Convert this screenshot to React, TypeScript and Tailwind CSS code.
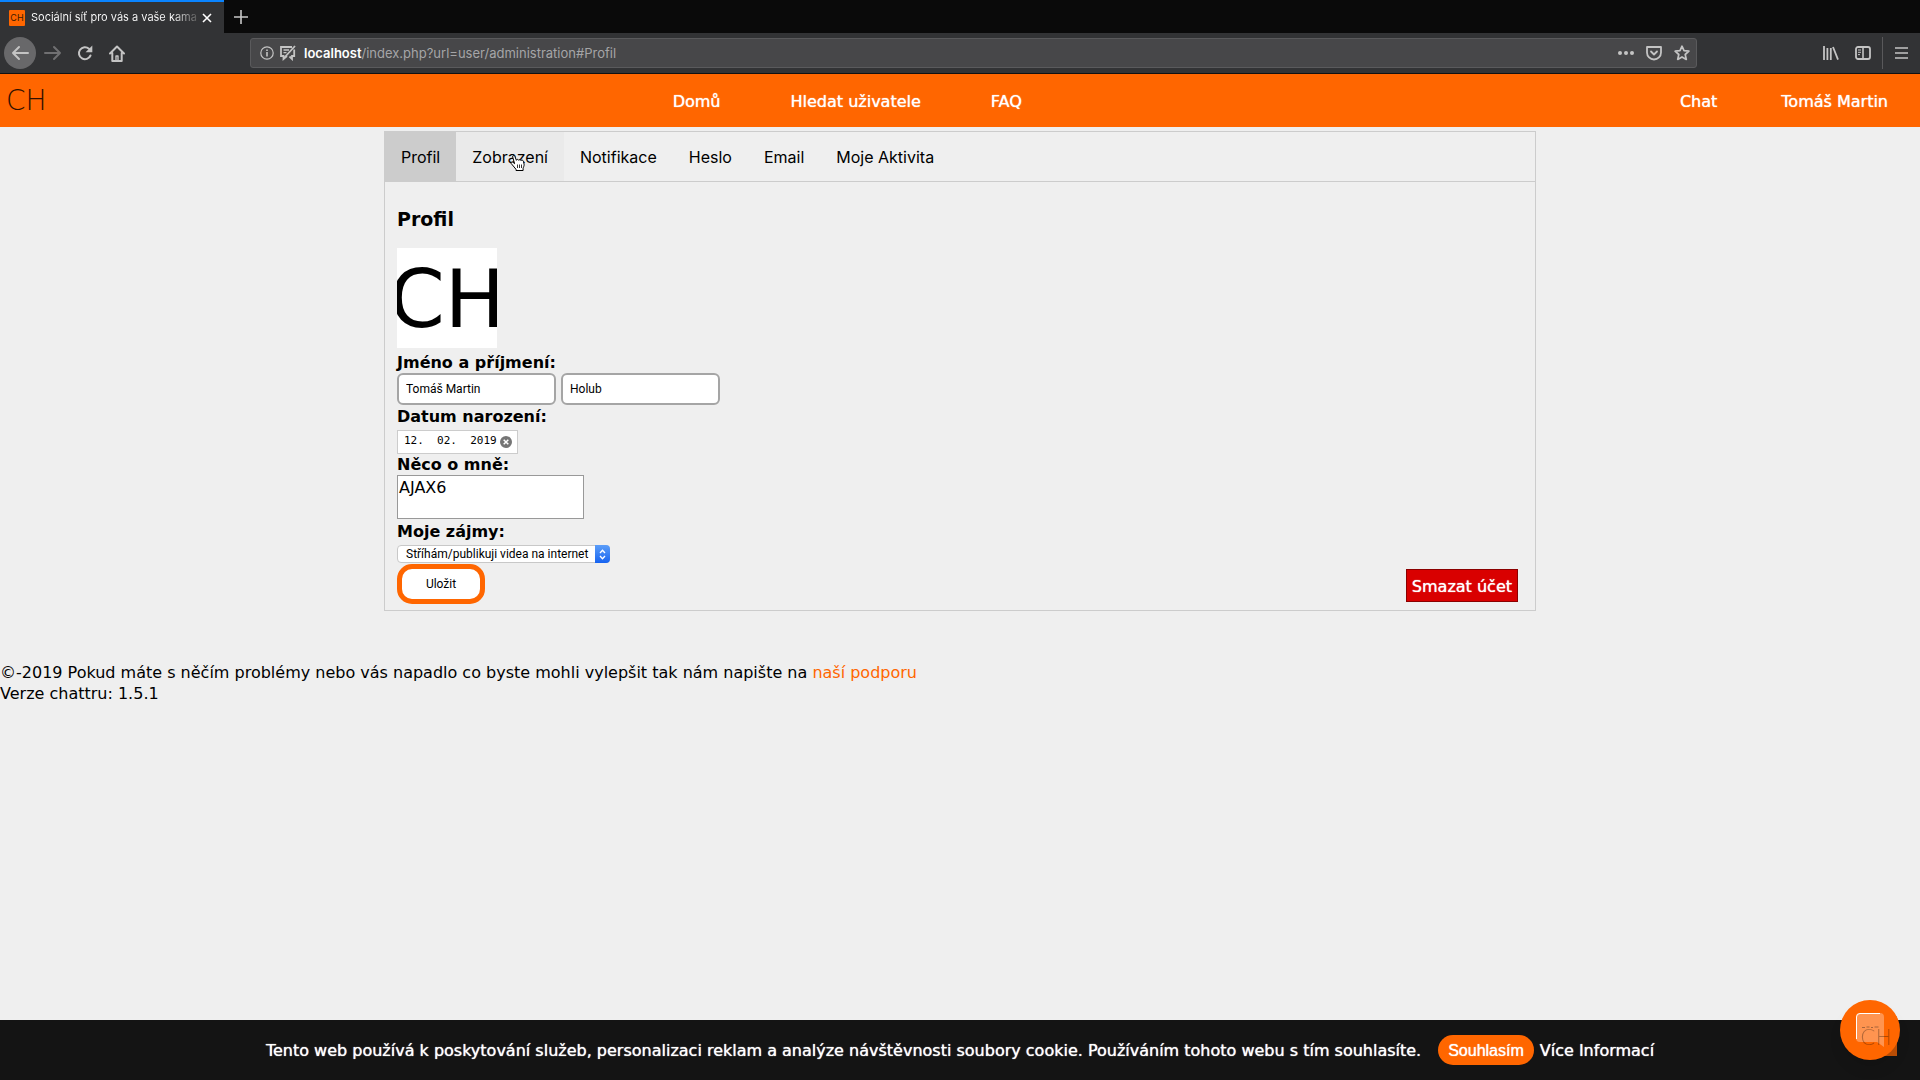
import { useState } from "react"

const tabs = ["Profil", "Zobrazení", "Notifikace", "Heslo", "Email", "Moje Aktivita"]

function BrowserChrome() {
	return (
		<div className="font-['Inter',sans-serif]">
			<div className="flex h-[33px] items-stretch bg-[#0a0a0a]">
				<div className="flex w-56 items-center border-t-2 border-[#0a84ff] bg-[#323335] pl-[9px] pr-3">
					<div className="flex h-4 w-4 shrink-0 items-center justify-center rounded-[1px] bg-[#f60] text-[9px] text-[#401a00]">
						CH
					</div>
					<p className="ml-[6px] flex-1 overflow-hidden whitespace-nowrap bg-linear-to-r from-white from-85% to-[#555] bg-clip-text text-[11px] text-transparent">
						Sociální síť pro vás a vaše kama
					</p>
					<button aria-label="Zavřít panel" className="ml-1 text-white">
						<svg width="10" height="10" viewBox="0 0 10 10" stroke="currentColor" strokeWidth="1.6">
							<path d="M1 1l8 8M9 1L1 9" />
						</svg>
					</button>
				</div>
				<button aria-label="Nový panel" className="ml-[10px] text-[#c8c8c8]">
					<svg width="14" height="14" viewBox="0 0 14 14" stroke="currentColor" strokeWidth="1.6">
						<path d="M7 0v14M0 7h14" />
					</svg>
				</button>
			</div>
			<div className="flex h-[41px] items-center border-b border-[#111] bg-[#323335] pl-1 text-[#c4c4c4]">
				<button
					aria-label="Zpět"
					className="flex h-8 w-8 items-center justify-center rounded-full bg-[#68686a]"
				>
					<svg width="18" height="16" viewBox="0 0 18 16" fill="none" stroke="currentColor" strokeWidth="2" strokeLinecap="round" strokeLinejoin="round">
						<path d="M17 8H2M8 2L2 8l6 6" />
					</svg>
				</button>
				<button aria-label="Vpřed" className="ml-2 text-[#707072]">
					<svg width="18" height="16" viewBox="0 0 18 16" fill="none" stroke="currentColor" strokeWidth="2" strokeLinecap="round" strokeLinejoin="round">
						<path d="M1 8h15M10 2l6 6-6 6" />
					</svg>
				</button>
				<button aria-label="Obnovit" className="ml-[14px]">
					<svg width="18" height="16" viewBox="0 0 18 16" fill="none" stroke="currentColor" strokeWidth="2">
						<path d="M14.5 10.5A6 6 0 1 1 13 3.8" strokeLinecap="round" />
						<path d="M16.3 .5v6.7H9.6z" fill="currentColor" stroke="none" />
					</svg>
				</button>
				<button aria-label="Domů" className="ml-[15px]">
					<svg width="16" height="17" viewBox="0 0 16 17" fill="none" stroke="currentColor" strokeWidth="2" strokeLinejoin="round" strokeLinecap="round">
						<path d="M1 8.5L8 1.5l7 7M3.3 8v8h9.4V8" />
						<path d="M7 16v-5h2v5" strokeWidth="1.4" />
					</svg>
				</button>
				<div className="ml-[125px] flex h-[30px] flex-1 items-center rounded-[3px] border border-[#5a5a5c] bg-[#474749] pl-[9px] pr-[6px]">
					<svg width="14" height="14" viewBox="0 0 14 14" fill="none" stroke="currentColor" strokeWidth="1.2">
						<circle cx="7" cy="7" r="6.2" />
						<path d="M7 6v4.4M7 3.4v1.5" strokeWidth="1.6" />
					</svg>
					<svg className="ml-[5px]" width="17" height="16" viewBox="0 0 17 16" fill="none" stroke="currentColor" strokeWidth="1.8">
						<path d="M13 2H2v9h2.5v3L8 11M15.2 4.5v6.5H13v3l-2.5-2.5" />
						<path d="M4.5 5H10M4.5 7.6h3" strokeWidth="1.3" />
						<path d="M16 1L5 13" />
					</svg>
					<p className="ml-2 flex-1 pt-[2px] text-[13px] text-[#a5a5a7]">
						<span className="font-semibold text-white">localhost</span>
						/index.php?url=user/administration#Profil
					</p>
					<button aria-label="Akce stránky">
						<svg width="16" height="4" viewBox="0 0 16 4" fill="currentColor">
							<circle cx="2" cy="2" r="2" />
							<circle cx="8" cy="2" r="2" />
							<circle cx="14" cy="2" r="2" />
						</svg>
					</button>
					<button aria-label="Pocket" className="ml-3">
						<svg width="16" height="15" viewBox="0 0 16 15" fill="none" stroke="currentColor" strokeWidth="1.8" strokeLinecap="round" strokeLinejoin="round">
							<path d="M1 1h14v5.5a7 7 0 0 1-14 0z" />
							<path d="M5 5.5l3 3 3-3" />
						</svg>
					</button>
					<button aria-label="Přidat do záložek" className="ml-3">
						<svg width="16" height="16" viewBox="0 0 16 16" fill="none" stroke="currentColor" strokeWidth="1.7" strokeLinejoin="round">
							<path d="M8 1.2l2 4.5 4.9.5-3.7 3.3 1.1 4.9L8 11.9l-4.3 2.5 1.1-4.9L1.1 6.2 6 5.7z" />
						</svg>
					</button>
				</div>
				<button aria-label="Knihovna" className="ml-[126px]">
					<svg width="16" height="14" viewBox="0 0 16 14" stroke="currentColor" strokeWidth="1.8">
						<path d="M1 0v14M4.4 2v12M7.8 2v12M10 1l5 12.6" />
					</svg>
				</button>
				<button aria-label="Postranní lišta" className="ml-4">
					<svg width="16" height="14" viewBox="0 0 16 14" fill="none" stroke="currentColor">
						<rect x="1" y="1" width="14" height="12" rx="2" strokeWidth="1.8" />
						<path d="M8 1v12" strokeWidth="1.6" />
						<path d="M3 4h3M3 6.3h3M3 8.6h2" />
					</svg>
				</button>
				<div className="ml-[11px] h-8 w-px bg-[#59595b]" />
				<button aria-label="Nabídka" className="ml-3 mr-3">
					<svg width="13" height="12" viewBox="0 0 13 12" stroke="currentColor" strokeWidth="1.7">
						<path d="M0 1h13M0 6h13M0 11h13" />
					</svg>
				</button>
			</div>
		</div>
	)
}

function HandCursor() {
	return (
		<svg
			className="pointer-events-none absolute left-[54px] top-[22px]"
			width="17"
			height="18"
			viewBox="0 0 17 18"
			fill="#fff"
			stroke="#000"
			strokeLinejoin="round"
		>
			<path d="M6 16.5v-1.2L1.2 9.5C.6 8.4 1.8 7.4 3 8.3l1.6 1.4L2.7 3C2.4 1.4 4.2.9 4.8 2.3l1.6 4c.2-1.3 2-1.2 2.3 0 .4-.9 2-.8 2.3.3.5-.8 2.2-.5 2.4.6l.7 3c.2 1.5-.6 2.8-1 4v2.3z" />
			<path d="M7.5 10.5v3.5M9.5 10.5v3.5M11.5 10.5v3.5" strokeWidth=".8" />
		</svg>
	)
}

function ProfileForm() {
	return (
		<form className="px-3 pb-[6px]" onSubmit={(e) => e.preventDefault()}>
			<h3 className="mt-[25px] text-[19px] leading-6 font-bold">Profil</h3>
			<div className="mt-[17px] flex h-[100px] w-[100px] items-center justify-center overflow-hidden bg-white pt-1 text-[80px] leading-none">
				CH
			</div>
			<div className="mt-[5px] flex flex-col items-start font-bold leading-5">
				<label htmlFor="jmeno">Jméno a příjmení:</label>
				<div className="flex gap-[5px] font-['Roboto',sans-serif] text-[12px] font-normal">
					<input
						id="jmeno"
						defaultValue="Tomáš Martin"
						className="h-8 w-[159px] rounded-md border-2 border-[#a5a5a5] bg-white px-[7px]"
					/>
					<input
						aria-label="Příjmení"
						defaultValue="Holub"
						className="h-8 w-[159px] rounded-md border-2 border-[#a5a5a5] bg-white px-[7px]"
					/>
				</div>
				<label htmlFor="datum" className="mt-[2px]">Datum narození:</label>
				<div className="mt-[3px] flex h-6 w-[121px] items-center border border-[#ccc] bg-white pl-[6px] pr-[5px] font-normal">
					<input
						id="datum"
						defaultValue="12.  02.  2019"
						className="min-w-0 flex-1 pb-[3px] font-['DejaVu_Sans_Mono',monospace] text-[11px] leading-4"
					/>
					<button type="button" aria-label="Smazat datum">
						<svg className="block" width="12" height="12" viewBox="0 0 12 12" stroke="#fff" strokeWidth="1.5">
							<circle cx="6" cy="6" r="6" fill="#757575" stroke="none" />
							<path d="M3.7 3.7l4.6 4.6M8.3 3.7L3.7 8.3" />
						</svg>
					</button>
				</div>
				<label htmlFor="omne" className="mt-[1px]">Něco o mně:</label>
				<textarea
					id="omne"
					defaultValue="AJAX6"
					className="h-11 w-[187px] resize-none border border-[#999] bg-white px-[1px] pt-[2px] font-normal"
				/>
				<label htmlFor="zajmy" className="mt-[3px]">Moje zájmy:</label>
				<div className="relative mt-[3px] font-['Roboto',sans-serif] text-[12px] font-normal">
					<select
						id="zajmy"
						className="block h-[18px] w-[213px] appearance-none rounded border border-[#c8c8c8] bg-white pl-2 pr-4 leading-4"
					>
						<option>Stříhám/publikuji videa na internet</option>
					</select>
					<span className="pointer-events-none absolute inset-y-0 right-0 flex w-[15px] items-center justify-center rounded-r bg-linear-to-b from-[#5b9df8] to-[#1563f0]">
						<svg width="7" height="11" viewBox="0 0 7 11" fill="none" stroke="#fff" strokeWidth="1.3">
							<path d="M1 4l2.5-2.8L6 4M1 7l2.5 2.8L6 7" />
						</svg>
					</span>
				</div>
			</div>
			<div className="mt-[1px] flex items-end justify-between pr-[5px]">
				<button className="h-10 w-[88px] rounded-[15px] border-[5px] border-[#f60] bg-white font-['Roboto',sans-serif] text-[12px]">
					Uložit
				</button>
				<button
					type="button"
					className="mb-[2px] h-[33px] border border-[#8b0000] bg-[#d90000] px-[5px] pt-[2px] text-white [text-shadow:0_0_1px_#fff]"
				>
					Smazat účet
				</button>
			</div>
		</form>
	)
}

export default function App() {
	const [active, setActive] = useState("Profil")

	return (
		<div className="min-h-screen bg-[#efefef] font-['DejaVu_Sans',sans-serif] text-base text-black">
			<BrowserChrome />
			<header className="flex h-[53px] items-center justify-between bg-[#f60] pt-[2px] text-white">
				<a href="#" className="pb-[2px] pl-[6px] text-[28px] font-extralight text-[#301000]">
					CH
				</a>
				<nav className="flex gap-[6px] [text-shadow:0_0_1px_#fff]">
					<a href="#" className="px-8">Domů</a>
					<a href="#" className="px-8">Hledat uživatele</a>
					<a href="#" className="px-8">FAQ</a>
				</nav>
				<nav className="flex [text-shadow:0_0_1px_#fff]">
					<a href="#" className="px-8">Chat</a>
					<a href="#" className="px-8">Tomáš Martin</a>
				</nav>
			</header>

			<main className="mx-auto mt-1 w-3/5 border border-[#ccc]">
				<div className="flex h-[50px] border-b border-[#ccc] font-['Inter',sans-serif]">
					{tabs.map((tab) => (
						<div key={tab} className="relative flex">
							<button
								onClick={() => setActive(tab)}
								className={`px-4 ${
									tab === active
										? "bg-[#ccc]"
										: tab === "Zobrazení"
											? "bg-[#eaeaea]"
											: "hover:bg-[#eaeaea]"
								}`}
							>
								{tab}
							</button>
							{tab === "Zobrazení" && <HandCursor />}
						</div>
					))}
				</div>
				<ProfileForm />
			</main>

			<footer className="mt-[51px] leading-[21px]">
				<p>
					©-2019 Pokud máte s něčím problémy nebo vás napadlo co byste mohli
					vylepšit tak nám napište na{" "}
					<a href="#" className="text-[#f60]">naší podporu</a>
				</p>
				<p>Verze chattru: 1.5.1</p>
			</footer>

			<div className="fixed inset-x-0 bottom-0 flex h-[60px] items-center justify-center bg-[#141414] text-white [text-shadow:0_0_1px_#fff]">
				<p className="pt-[2px]">
					Tento web používá k poskytování služeb, personalizaci reklam a analýze
					návštěvnosti soubory cookie. Používáním tohoto webu s tím souhlasíte.
				</p>
				<button className="ml-[17px] h-[30px] rounded-full bg-[#f60] px-[10px] pt-[2px] font-['Liberation_Sans',sans-serif] [text-shadow:0_0_1px_#fff]">
					Souhlasím
				</button>
				<a href="#" className="ml-[6px] pt-[2px]">Více Informací</a>
			</div>

			<button
				aria-label="Otevřít chat"
				className="fixed bottom-5 right-5 flex h-[60px] w-[60px] items-center justify-center rounded-full bg-[#f60] shadow-lg"
			>
				<span className="absolute bottom-1 right-[3px] h-10 w-10 bg-[#f60]/70" />
				<svg className="relative" width="28" height="34" viewBox="0 0 28 34">
					<path d="M4 0h20a4 4 0 0 1 4 4v30l-7-5H4a4 4 0 0 1-4-4V4a4 4 0 0 1 4-4z" fill="#ff9450" />
					<path d="M.5 26V4A3.5 3.5 0 0 1 4 .5h20" fill="none" stroke="#fff" />
					<path d="M6 14.5h3M10.5 14h3M15 14.5h2M18.5 14h4" stroke="#a8643a" />
				</svg>
				<span className="absolute bottom-[11px] right-2 text-[22px] leading-none font-extralight text-black/30">
					CH
				</span>
			</button>
		</div>
	)
}
